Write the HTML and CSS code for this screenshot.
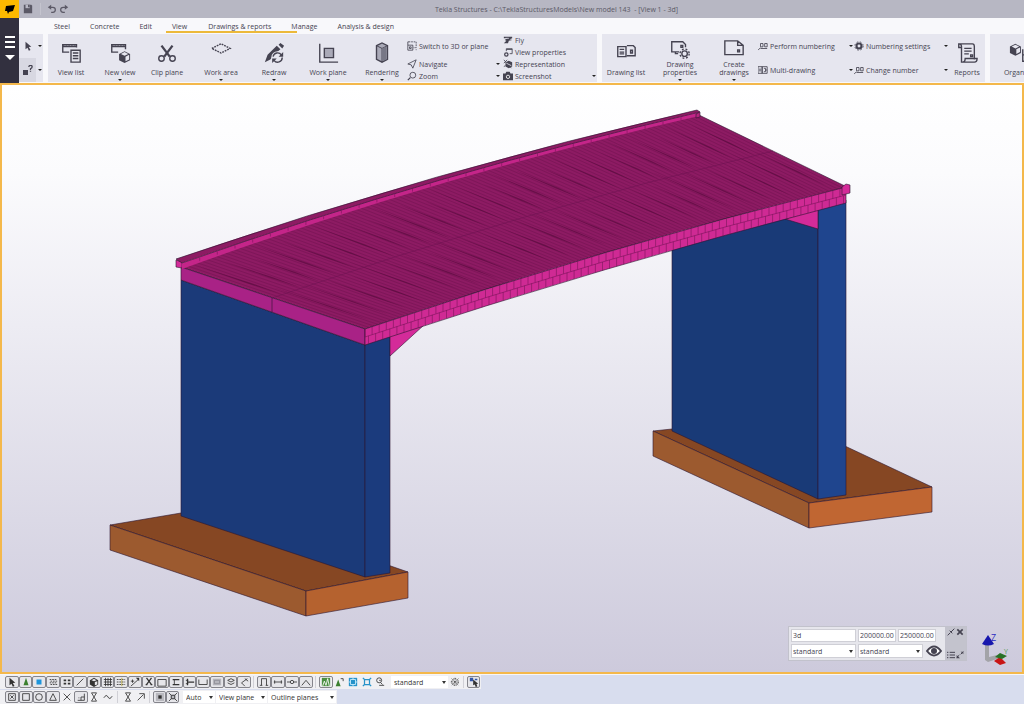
FILE: index.html
```html
<!DOCTYPE html>
<html lang="en">
<head>
    <meta charset="UTF-8">
    <title>Tekla Structures</title>
    <link rel="stylesheet" href="styles.css">
</head>
<body>
    <!-- Icon shapes -->
    <svg class="sprite" aria-hidden="true">
        <symbol id="save" viewBox="0 0 12 12"><path fill="currentColor" d="M1 1h9l1 1v9H1z"/><path fill="#b7b7c3" d="M3 1h5v4H3z"/><path fill="currentColor" d="M6 1h2v3H6z"/></symbol>
        <symbol id="undo" viewBox="0 0 12 12"><path class="l2" d="M3 4h4a3 3 0 0 1 0 6H5"/><path fill="currentColor" d="M1 4l4-3v6z"/></symbol>
        <symbol id="redo" viewBox="0 0 12 12"><path class="l2" d="M9 4H5a3 3 0 0 0 0 6h2"/><path fill="currentColor" d="M11 4L7 1v6z"/></symbol>
        <symbol id="cursor" viewBox="0 0 12 12"><path fill="currentColor" d="M3 1l7 6-3 .3 2 3.500-2 1-1.600-3.600L3 10z"/></symbol>
        <symbol id="ask" viewBox="0 0 12 12"><path fill="currentColor" d="M0 6h6v6H0z"/><path class="l2" d="M7 2.500q0-2 2-2t2 1.500-2 2.500V6M9 7v1"/></symbol>
        <symbol id="viewlist" viewBox="0 0 24 24"><path class="l2" d="M10 11H3V3h15v3M3 5h15"/><path class="l2" stroke-dasharray="2 1" d="M3 3h15"/><path class="l2" d="M12 9h10v13H12zM14 12h6M14 15h6M14 18h6"/></symbol>
        <symbol id="newview" viewBox="0 0 24 24"><path class="l2" d="M10 11H3V3h15v5M3 5h15"/><path class="l2" stroke-dasharray="2 1" d="M3 3h15"/><path fill="currentColor" d="M11 13l6-3 6 3v7l-6 3-6-3z"/><path fill="#e6e6ef" d="M13 13l4-2 4 2-4 2zM18 16l4-2v5l-4 2z"/></symbol>
        <symbol id="clip" viewBox="0 0 24 24"><path class="l3" d="M6 4l9 12M18 4L9 16"/><circle class="l2" cx="6" cy="18" r="3"/><circle class="l2" cx="18" cy="18" r="3"/></symbol>
        <symbol id="area" viewBox="0 0 24 24"><path class="l2" stroke-dasharray="2 1" d="M2 7l10-5 10 5-10 5z"/></symbol>
        <symbol id="redraw" viewBox="0 0 24 24"><path fill="currentColor" d="M2 22l3-8L15 4l4 4-7 6-4 5zM17 3l2-2 4 3-2 3z"/><circle cx="16" cy="17" r="7" fill="#e6e6ef"/><path class="l2" d="M11 16a5 5 0 0 1 9-2M21 17a5 5 0 0 1-9 3"/><path fill="currentColor" d="M22 11v5h-5zM10 23v-5h5z"/></symbol>
        <symbol id="plane" viewBox="0 0 24 24"><path class="l2" d="M3 2v20h20"/><path class="l2" fill="#b4b4c2" d="M8 7h10v10H8z"/></symbol>
        <symbol id="render" viewBox="0 0 24 24"><path class="l2" fill="#aaaab8" d="M6 4l6-3 6 3v15l-6 3-6-3z"/><path class="l" d="M6 4l6 3 6-3M12 7v15"/><path fill="#777786" d="M12 7l5-2v14l-5 2z"/></symbol>
        <symbol id="switch" viewBox="0 0 12 12"><path class="l" d="M1 5h6v6H1zM1 5V1h3M3 7h2v2H3z"/><path class="l" stroke-dasharray="2 1" d="M5 1h6v7H8M11 10v1"/></symbol>
        <symbol id="nav" viewBox="0 0 12 12"><path class="l" d="M1 6l10-5-4 10-2-4z"/></symbol>
        <symbol id="zoom" viewBox="0 0 12 12"><circle class="l" cx="7" cy="5" r="3.500"/><path class="l2" d="M4 8l-3 3"/></symbol>
        <symbol id="fly" viewBox="0 0 12 12"><path fill="currentColor" d="M1 2h10v2L8 5l3 1-4 1-1 3H1l3-3-2-1 3-2H1z"/><path stroke="#e6e6ef" d="M3 4h4"/></symbol>
        <symbol id="vprops" viewBox="0 0 12 12"><path class="l" d="M4 5V2h7v6H8M4 3h7"/><circle class="l2" cx="4" cy="9" r="2"/></symbol>
        <symbol id="repr" viewBox="0 0 12 12"><path fill="currentColor" d="M3 4l4-2 4 2v5l-4 2-4-2z"/><path class="l" d="M1 1l9 10M1 5l4-4M1 9l2-1"/><path d="M4 5l6 3" stroke="#e6e6ef"/></symbol>
        <symbol id="camera" viewBox="0 0 12 12"><path fill="currentColor" d="M0 3h3l1-2h4l1 2h3v8H0z"/><circle cx="6" cy="7" r="2" fill="none" stroke="#fff"/></symbol>
        <symbol id="dlist" viewBox="0 0 24 24"><path class="l2" d="M3 5h9v11H3zM5 8h5M5 11h5M5 13h5M13 4h7l2 2v9h-9"/><path class="l2" d="M17 9h2v3h-2z"/></symbol>
        <symbol id="dprops" viewBox="0 0 24 24"><path class="l2" d="M11 14H3V3h12l3 3v3M7 14v2h3M13 7h2v2h-2z"/><circle class="l2" cx="17" cy="16" r="3"/><circle class="l2" stroke-dasharray="2 2" cx="17" cy="16" r="5"/></symbol>
        <symbol id="create" viewBox="0 0 24 24"><path class="l2" d="M2 2h14l6 5v10H2zM16 2v5h6M16 12h2v2h-2z"/></symbol>
        <symbol id="number" viewBox="0 0 12 12"><path class="l" d="M0 11l3-3M3 3h3v4H3zM8 3h3v4H8zM3 9h8"/></symbol>
        <symbol id="multi" viewBox="0 0 12 12"><path class="l" d="M0 2h5v8H0zM5 2h6v8H5zM1 5h3M1 7h3M7 4h2v4H7M9 6h2"/></symbol>
        <symbol id="gear" viewBox="0 0 12 12"><circle class="l3" cx="6" cy="6" r="3"/><circle class="l" stroke-dasharray="2 2" cx="6" cy="6" r="5"/></symbol>
        <symbol id="report" viewBox="0 0 24 24"><path class="l2" d="M6 18V5q0-3-3-3v4h3M3 2h15q2 0 2 3v14M6 18v4h14q3 0 3-4H10q0 4-3 4M9 7h8M9 10h8M9 13h5M16 14h2v2h-2z"/></symbol>
        <symbol id="org" viewBox="0 0 24 24"><path fill="currentColor" d="M1 5l6-3 6 3v7l-6 3-6-3z"/><path d="M3 5l4-2 4 2-4 2zM8 8l4-2v5l-4 2z" fill="#e6e6ef"/><path class="l2" d="M15 8v13h3M15 14h3M18 12h5v4h-5zM18 19h5v4h-5z"/></symbol>
        <symbol id="cone" viewBox="0 0 12 12"><path fill="#3b8030" d="M6 1l3 9H3z"/></symbol>
        <symbol id="blue" viewBox="0 0 12 12"><path fill="#1c95dc" d="M3 3h6v6H3z"/></symbol>
        <symbol id="hatch" viewBox="0 0 12 12"><path class="l" stroke-dasharray="2 1" d="M2 3h8M3 5h8M2 7h8M3 9h8"/></symbol>
        <symbol id="dots" viewBox="0 0 12 12"><path fill="currentColor" d="M2 3h3v2H2zM7 3h3v2H7zM2 7h3v2H2zM7 7h3v2H7z"/></symbol>
        <symbol id="line" viewBox="0 0 12 12"><path class="l" d="M2 10l8-8"/></symbol>
        <symbol id="cube" viewBox="0 0 12 12"><path fill="currentColor" d="M1 4l5-3 5 3v5l-5 3-5-3z"/><path fill="#e6e6ea" d="M3 4l3-2 3 2-3 1zM7 6l3-1v4l-3 1z"/></symbol>
        <symbol id="grid" viewBox="0 0 12 12"><path class="l" d="M1 3h10M1 6h10M1 9h10M3 1v10M6 1v10M9 1v10"/></symbol>
        <symbol id="gridc" viewBox="0 0 12 12"><path class="l" stroke-dasharray="2 1" d="M1 3h10M1 6h10M1 9h10"/><path stroke="#b3a437" d="M7 1v10"/></symbol>
        <symbol id="weld" viewBox="0 0 12 12"><path class="l" d="M1 11l9-8M3 3v4M1 5h4"/><path fill="currentColor" d="M7 1h4v4z"/></symbol>
        <symbol id="cut" viewBox="0 0 12 12"><path class="l2" d="M3 1l6 8M9 1L3 9"/><path class="l2" d="M2 9h2M8 9h2"/></symbol>
        <symbol id="box" viewBox="0 0 12 12"><path class="l" d="M1 3h10v8H1z"/></symbol>
        <symbol id="bars" viewBox="0 0 12 12"><path class="l2" d="M2 3h8M2 9h8"/><path class="l" d="M4 3v6"/></symbol>
        <symbol id="bolt" viewBox="0 0 12 12"><path class="l2" d="M3 2v8M3 6h8"/><path class="l" d="M1 4h3M1 8h3"/></symbol>
        <symbol id="chan" viewBox="0 0 12 12"><path class="l" d="M1 3v6h10V3"/></symbol>
        <symbol id="mesh" viewBox="0 0 12 12"><path fill="#b5b5bc" d="M1 2h10v8H1z"/><path stroke="#8d8d95" fill="none" d="M3 4h6v4H3z"/></symbol>
        <symbol id="layer" viewBox="0 0 12 12"><path class="l" d="M2 4l4-2 4 2-4 2zM2 7l4 2 4-2"/></symbol>
        <symbol id="pour" viewBox="0 0 12 12"><path class="l" d="M10 2L3 7l4 4M7 2l4 3"/></symbol>
        <symbol id="frame" viewBox="0 0 12 12"><path class="l" d="M3 10V2h6v8M1 10h3M8 10h3"/></symbol>
        <symbol id="dist" viewBox="0 0 12 12"><path class="l" d="M1 6h10M2 4v4M10 4v4"/></symbol>
        <symbol id="node" viewBox="0 0 12 12"><path class="l" d="M0 6h4M8 6h4"/><circle class="l" cx="6" cy="6" r="2"/></symbol>
        <symbol id="roof" viewBox="0 0 12 12"><path class="l" d="M1 10l5-6 5 6"/></symbol>
        <symbol id="green" viewBox="0 0 12 12"><path fill="#4b8f42" d="M1 1h10v10H1z"/><path d="M2 11l2-6 2 5 2-8 2 9" fill="none" stroke="#fff"/></symbol>
        <symbol id="greenup" viewBox="0 0 12 12"><path fill="#3b8030" d="M5 3l3 8H2z"/><path class="l" d="M8 2h3v3"/></symbol>
        <symbol id="cyan" viewBox="0 0 12 12"><path fill="#2793c9" d="M1 1h10v10H1z"/><path fill="none" stroke="#d2f1ff" d="M3 3h6v6H3zM1 6h2M9 6h2M6 1v2M6 9v2"/></symbol>
        <symbol id="cyan2" viewBox="0 0 12 12"><path fill="none" stroke="#2793c9" stroke-width="1.500" d="M3 3h6v6H3zM1 1l2 2M11 1L9 3M1 11l2-2M11 11L9 9"/></symbol>
        <symbol id="key" viewBox="0 0 12 12"><circle class="l" cx="5" cy="4" r="3"/><path class="l" d="M5 4h2M7 7l2 2M5 10h6"/></symbol>
        <symbol id="snow" viewBox="0 0 12 12"><path class="l" stroke-dasharray="1 1" d="M2 2l8 8M10 2l-8 8M6 1v10M1 6h10"/><circle class="l" stroke-dasharray="2 1" cx="6" cy="6" r="4"/></symbol>
        <symbol id="pick" viewBox="0 0 12 12"><path fill="#3457a8" d="M1 1h4v4H1zM7 2h3v2H7z"/><path fill="currentColor" d="M5 3l6 5-2 .5 1 3-2 .5-1-3-2 1z"/></symbol>
        <symbol id="boxx" viewBox="0 0 12 12"><path class="l" d="M2 2h8v8H2zM4 4l4 4M8 4L4 8"/></symbol>
        <symbol id="sq" viewBox="0 0 12 12"><path class="l" d="M2 2h8v8H2z"/></symbol>
        <symbol id="circ" viewBox="0 0 12 12"><circle class="l" cx="6" cy="6" r="4"/></symbol>
        <symbol id="tri" viewBox="0 0 12 12"><path class="l" d="M6 2l4 8H2z"/></symbol>
        <symbol id="x" viewBox="0 0 12 12"><path class="l" d="M2 2l8 8M10 2l-8 8"/></symbol>
        <symbol id="perp" viewBox="0 0 12 12"><path class="l" d="M10 2v8H2M6 10V6h4M3 7h1"/></symbol>
        <symbol id="glass" viewBox="0 0 12 12"><path class="l" d="M3 1h6L3 11h6L3 1"/></symbol>
        <symbol id="wave" viewBox="0 0 12 12"><path class="l" d="M1 7q3-5 5-1t5-1"/></symbol>
        <symbol id="arrow" viewBox="0 0 12 12"><path class="l" d="M2 10l7-7M4 2h6v6"/></symbol>
        <symbol id="dot" viewBox="0 0 12 12"><path fill="#b9b9bf" d="M1 1h10v10H1z"/><path fill="currentColor" d="M4 4h4v4H4z"/></symbol>
        <symbol id="corners" viewBox="0 0 12 12"><path fill="#b9b9bf" d="M3 3h6v6H3z"/><path class="l" d="M1 1l3 3M11 1L8 4M1 11l3-3M11 11L8 8M4 4h4v4H4z"/></symbol>
        <symbol id="eye" viewBox="0 0 16 12"><path d="M1 6q7-9 14 0-7 9-14 0z" fill="#fff" stroke="currentColor" stroke-width="2"/><circle cx="8" cy="6" r="3" fill="currentColor"/></symbol>
        <symbol id="pin" viewBox="0 0 12 12"><path class="l2" d="M1 11l4-4M4 4l4 4M6 6l5-5"/></symbol>
        <symbol id="close" viewBox="0 0 12 12"><path class="l3" d="M2 2l8 8M10 2l-8 8"/></symbol>
        <symbol id="rows" viewBox="0 0 12 12"><path class="l2" d="M0 2h2M4 2h8M0 6h2M4 6h8M0 10h2M4 10h8"/></symbol>
        <symbol id="shrink" viewBox="0 0 12 12"><path class="l2" d="M1 10l4-4M7 5l4-4"/><path fill="currentColor" d="M1 6v5h5zM7 1h4v4z"/></symbol>
    </svg>

    <header class="titlebar">
        <div class="logo"><svg viewBox="0 0 19 18"><path d="M6 6l9-1-2 6-4 1-1 2-1-3H5z"/></svg></div>
        <button class="tb-btn" aria-label="Save"><svg><use href="#save"/></svg></button>
        <span class="tb-line"></span>
        <button class="tb-btn" aria-label="Undo"><svg><use href="#undo"/></svg></button>
        <button class="tb-btn" aria-label="Redo"><svg><use href="#redo"/></svg></button>
        <h1>Tekla Structures - C:\TeklaStructuresModels\New model 143 &nbsp;- [View 1 - 3d]</h1>
    </header>

    <div class="top">
        <button class="menu" aria-label="Menu"><i></i><i></i><i></i><b></b></button>
        <div class="top-main">
            <nav class="tabs">
                <a href="#">Steel</a>
                <a href="#">Concrete</a>
                <a href="#">Edit</a>
                <span class="active"><a href="#">View</a><a href="#">Drawings &amp; reports</a></span>
                <a href="#">Manage</a>
                <a href="#">Analysis &amp; design</a>
            </nav>
            <div class="ribbon">
                <div class="quick">
                    <button class="drop" aria-label="Select"><svg><use href="#cursor"/></svg></button>
                    <button class="drop" aria-label="Inquire"><svg><use href="#ask"/></svg></button>
                </div>
                <div class="group group-view">
                    <button class="big"><svg><use href="#viewlist"/></svg>View list</button>
                    <button class="big more"><svg><use href="#newview"/></svg>New view</button>
                    <button class="big"><svg><use href="#clip"/></svg>Clip plane</button>
                    <button class="big more"><svg><use href="#area"/></svg>Work area</button>
                    <button class="big more"><svg><use href="#redraw"/></svg>Redraw</button>
                    <button class="big more"><svg><use href="#plane"/></svg>Work plane</button>
                    <button class="big more"><svg><use href="#render"/></svg>Rendering</button>
                    <div class="col four">
                        <button class="small tall"><svg><use href="#switch"/></svg>Switch to 3D or plane</button>
                        <button class="small drop"><svg><use href="#nav"/></svg>Navigate</button>
                        <button class="small drop"><svg><use href="#zoom"/></svg>Zoom</button>
                    </div>
                    <div class="col four last">
                        <button class="small"><svg><use href="#fly"/></svg>Fly</button>
                        <button class="small"><svg><use href="#vprops"/></svg>View properties</button>
                        <button class="small"><svg><use href="#repr"/></svg>Representation</button>
                        <button class="small drop"><svg><use href="#camera"/></svg>Screenshot</button>
                    </div>
                </div>
                <div class="group group-draw">
                    <button class="big"><svg><use href="#dlist"/></svg>Drawing list</button>
                    <button class="big two more"><svg><use href="#dprops"/></svg>Drawing<br>properties</button>
                    <button class="big two more"><svg><use href="#create"/></svg>Create<br>drawings</button>
                    <div class="col">
                        <button class="small drop"><svg><use href="#number"/></svg>Perform numbering</button>
                        <button class="small drop"><svg><use href="#multi"/></svg>Multi-drawing</button>
                    </div>
                    <div class="col">
                        <button class="small drop"><svg><use href="#gear"/></svg>Numbering settings</button>
                        <button class="small drop"><svg><use href="#number"/></svg>Change number</button>
                    </div>
                    <button class="big"><svg><use href="#report"/></svg>Reports</button>
                </div>
                <div class="group group-org">
                    <button class="big"><svg><use href="#org"/></svg>Organizer</button>
                </div>
            </div>
        </div>
    </div>

    <main class="view">
        <svg class="scene" viewBox="2 85 1020 587" role="img" aria-label="3d bridge model">
            <!-- footings -->
            <g class="edge">
                <path fill="#864723" d="M653 431L672 429 760 408 847 447 932 487 809 503z"/>
                <path fill="#9c5a2f" d="M653 431L809 503V528L653 456z"/>
                <path fill="#c06632" d="M809 503L932 487V512L809 528z"/>
                <path fill="#864723" d="M110 525L181 513 330 545 408 572 306 591z"/>
                <path fill="#9c5a2f" d="M110 525L306 591V616L110 550z"/>
                <path fill="#b5622f" d="M306 591L408 572V598L306 616z"/>
            </g>
            <!-- walls -->
            <g class="edge">
                <path fill="#193a77" d="M672 245L785 215 818 211V499L672 431z"/>
                <path fill="#1f458e" d="M818 208L846 200V495L818 499z"/>
                <path fill="#d42b99" d="M785 219L818 208V229z"/>
                <path fill="#1b3a79" d="M181 280L365 345V577L181 516z"/>
                <path fill="#1b3b7d" d="M365 345L390 335V573L365 577z"/>
                <path fill="#d42b99" d="M390 335L424 322V325L390 356z"/>
            </g>
            <!-- deck -->
            <g class="edge">
                <path fill="#8d1b63" d="M181 267Q438 175 699 115L847 187Q606 247 365 329z"/>
                <path fill="#a92286" d="M181 267L365 329V345L181 280zM272 298V312"/>
            </g>
            <g id="boards"></g>
            <path class="edge" fill="#cf2a94" d="M365 329Q606 247 846 187V203Q606 265 365 345z"/>
            <g id="bricks" class="joint"></g>
            <path class="edge" fill="#d42b99" d="M176 260L182 262V268L176 267zM842 187L846 184 850 185V193L842 195z"/>
            <path fill="#c42589" d="M182 263Q438 172 699 112V116Q438 176 182 269z"/>
            <path class="edge" fill="#8d1b63" d="M176 259Q436 170 697 110L700 112Q438 173 182 263z"/>
            <path class="edge" fill="#b3247c" d="M696 114L700 112V117L696 118z"/>
            <g id="curb" class="joint"></g>
            <!-- axes -->
            <path d="M985 644h4v13l12-3 2 3-15 5-3-2z" fill="#a3a3a8"/>
            <path d="M988 635l6 9q-6 3-12 0z" fill="#1717ad"/>
            <path d="M994 661l6-4 6 6-6 2z" fill="#c81515"/>
            <path d="M995 657l5-4 7 3-5 3z" fill="#297126"/>
            <text class="z" x="991" y="641">Z</text>
            <text class="y" x="1004" y="654">Y</text>
        </svg>

        <form class="panel">
            <div class="fields">
                <div class="frow"><input class="wide" aria-label="View name" value="3d"><input aria-label="Depth down" value="200000.00"><input aria-label="Depth up" value="250000.00"></div>
                <div class="frow">
                    <span class="pick wide"><select aria-label="View settings"><option>standard</option></select></span>
                    <span class="pick wide"><select aria-label="Visibility"><option>standard</option></select></span>
                    <button type="button" class="eye" aria-label="Show"><svg><use href="#eye"/></svg></button>
                </div>
            </div>
            <div class="panel-side">
                <button type="button" aria-label="Pin"><svg><use href="#pin"/></svg></button>
                <button type="button" aria-label="Close"><svg><use href="#close"/></svg></button>
                <button type="button" aria-label="List"><svg><use href="#rows"/></svg></button>
                <button type="button" aria-label="Collapse"><svg><use href="#shrink"/></svg></button>
            </div>
        </form>
    </main>

    <footer>
        <div class="bar">
            <div class="tools boxed select-tools" data-icons="cursor cone blue hatch dots line cube grid gridc weld cut box bars bolt chan mesh layer pour"></div>
            <div class="tools boxed mid-tools" data-icons="frame dist node roof"></div>
            <div class="tools color-tools" data-icons="green greenup cyan cyan2 key"></div>
            <span class="pick filter"><select aria-label="Selection filter"><option>standard</option></select></span>
            <div class="tools" data-icons="snow"></div>
            <div class="tools boxed last-tool" data-icons="pick"></div>
        </div>
        <div class="bar">
            <div class="tools snap-tools" data-icons="boxx sq circ tri x perp glass wave"></div>
            <div class="tools" data-icons="glass arrow"></div>
            <div class="tools boxed" data-icons="dot corners"></div>
            <span class="pick auto"><select aria-label="Snap depth"><option>Auto</option></select></span>
            <span class="pick vplane"><select aria-label="Plane"><option>View plane</option></select></span>
            <span class="pick oplane"><select aria-label="Outline"><option>Outline planes</option></select></span>
        </div>
    </footer>
    <script src="script.js"></script>
</body>
</html>
```
FILE: styles.css
```css
* {
    box-sizing: border-box;
}
body {
    margin: 0;
    min-height: 100vh;
    display: flex;
    flex-direction: column;
    font-family: "Open Sans", "Noto Sans", sans-serif;
    font-size: 7px;
    line-height: 9px;
    color: #454351;
    background: #fff;
    overflow: hidden;
}
button, input, select {
    font: inherit;
    color: inherit;
    margin: 0;
    padding: 0;
    border: 0;
    background: none;
    border-radius: 0;
}
svg {
    display: block;
}
.sprite {
    position: absolute;
    width: 0;
    height: 0;
}
.l, .l2, .l3 {
    fill: none;
    stroke: currentColor;
    stroke-width: 1;
}
.l2 {
    stroke-width: 1.5;
}
.l3 {
    stroke-width: 2.5;
}
.l2[fill] {
    fill: #aaaab8;
}

/* Title bar */
.titlebar {
    display: flex;
    align-items: center;
    height: 18px;
    background: #b7b7c3;
    color: #5b5966;
}
.titlebar h1 {
    flex: 1;
    margin: 0;
    padding-left: 18px;
    text-align: center;
    font-size: 7px;
    font-weight: normal;
}
.logo {
    width: 19px;
    height: 18px;
    background: #fdb900;
}
.tb-btn {
    width: 12px;
}
.tb-btn svg {
    width: 10px;
    height: 10px;
}
.logo + .tb-btn {
    margin-left: 4px;
}
.tb-line {
    width: 1px;
    height: 12px;
    margin: 0 6px 0 5px;
    background: #c4c4ce;
}

/* Tabs and ribbon */
.top {
    display: flex;
    height: 65px;
    background: #f8f8fb;
}
.menu {
    display: flex;
    flex-direction: column;
    align-items: center;
    gap: 3px;
    width: 19px;
    padding-top: 18px;
    background: #32303f;
}
.menu i {
    width: 10px;
    height: 2px;
    background: #fff;
}
.menu b {
    margin-top: 4px;
    border: 5px solid transparent;
    border-top-color: #fff;
}
.top-main {
    flex: 1;
    min-width: 0;
}
.tabs {
    display: flex;
    gap: 20px;
    height: 16px;
    padding: 4px 0 0 35px;
}
.tabs a {
    color: inherit;
    text-decoration: none;
}
.tabs .active {
    display: flex;
    gap: 21px;
    height: 11px;
    margin: 0 -26px 0 -6px;
    padding: 0 26px 0 6px;
    border-bottom: 2px solid #ecb93a;
}
.ribbon {
    display: flex;
    gap: 5px;
    height: 48px;
    overflow: hidden;
}
.quick {
    display: grid;
    flex: none;
    width: 24px;
    background: #e6e6ef;
}
.quick .drop {
    padding-left: 4px;
}
.quick .drop:last-child {
    background: linear-gradient(90deg, #d8d8e2 17px, #e6e6ef 17px);
}
.quick svg {
    width: 10px;
    height: 10px;
}
.group {
    display: grid;
    flex: none;
    background: #e6e6ef;
}
.group-view {
    grid-template-columns: 46px 52px 42px 66px 40px 68px 40px 99px 96px;
}
.group-draw {
    grid-template-columns: 48px 60px 48px 96px 95px 36px;
}
.group-org {
    grid-template-columns: 60px;
}
.big {
    display: flex;
    flex-direction: column;
    align-items: center;
    position: relative;
    padding-top: 8px;
    white-space: nowrap;
    line-height: 8px;
}
.big svg {
    width: 22px;
    height: 22px;
    margin-bottom: 5px;
}
.big.two {
    padding-top: 5px;
}
.big.two svg {
    margin-bottom: 0;
}
.big.more::after {
    content: "";
    position: absolute;
    bottom: 1px;
    border: 2px solid transparent;
    border-top-color: #222;
    border-bottom: 0;
}
.col {
    display: grid;
    grid-template-rows: 1fr 1fr;
}
.four {
    grid-template-rows: repeat(4, 12px);
    padding-left: 5px;
}
.last {
    padding-left: 2px;
}
.small {
    display: flex;
    align-items: center;
    gap: 2px;
    white-space: nowrap;
}
.small svg {
    width: 10px;
    height: 10px;
}
.tall {
    grid-row: span 2;
}
.drop {
    display: flex;
    align-items: center;
}
.drop::after {
    content: "";
    margin: 0 1px 0 auto;
    border: 2px solid transparent;
    border-top-color: #222;
    border-bottom: 0;
}

/* 3d view */
.view {
    position: relative;
    flex: 1;
    min-height: 0;
    border: 2px solid #f4b84b;
    background: linear-gradient(#fff, #fbfbfd 15%, #cdcadc);
}
.scene {
    position: absolute;
    width: 100%;
    height: 100%;
}
.edge {
    stroke: #2b1530;
    stroke-width: 0.6;
}
.joint {
    fill: none;
    stroke: #6b1250;
    stroke-width: 0.5;
}
.board {
    stroke: #4f0938;
    stroke-width: 0.5;
    opacity: 0.45;
}
.streak {
    fill: #560b3c;
    opacity: 0.65;
}
.scene text {
    font-size: 9px;
}
.scene .z {
    fill: #2b2bc0;
}
.scene .y {
    fill: #4f9c4c;
    font-size: 7px;
}
.panel {
    position: absolute;
    right: 55px;
    bottom: 11px;
    display: flex;
    height: 35px;
    border: 1px solid #c2c2cc;
    background: #e6e6ec;
}
.fields {
    display: grid;
    gap: 2px;
    width: 156px;
    padding: 2px;
}
.frow {
    display: flex;
    gap: 2px;
}
.frow input, .frow .pick {
    width: 38px;
    border: 1px solid #cfcfd6;
    background: #fff;
    padding-left: 1px;
}
.frow .wide {
    width: 65px;
}
.eye {
    flex: 1;
}
.eye svg {
    width: 16px;
    height: 12px;
    margin: 0 auto;
}
.panel-side {
    display: grid;
    grid-template-columns: 1fr 1fr;
    align-content: space-between;
    justify-items: center;
    width: 21px;
    padding: 1px;
    background: #c3c3cd;
}
.panel-side svg {
    width: 8px;
    height: 8px;
}

/* Drop-downs */
.pick {
    display: flex;
    align-items: center;
    position: relative;
    background: #fff;
}
.pick select {
    appearance: none;
    width: 100%;
    outline: 0;
}
.pick::after {
    content: "";
    position: absolute;
    right: 2px;
    border: 2px solid transparent;
    border-top: 3px solid #333;
    border-bottom: 0;
}

/* Bottom toolbars */
footer {
    display: grid;
    gap: 1px;
    padding: 1px 0 2px;
    background: linear-gradient(#f6f6f8 1px, #d8ddee 1px, #d8ddee 30px, #fff 30px);
    color: #333;
}
.bar {
    display: flex;
    align-items: center;
    justify-self: start;
    height: 14px;
    padding: 0 1px 0 5px;
    background: #f0f0f3;
}
.tools {
    display: flex;
}
.tools button {
    display: flex;
    flex: 1;
    justify-content: center;
    align-items: center;
    min-width: 13px;
    height: 12px;
    border: 1px solid transparent;
}
.tools svg {
    width: 10px;
    height: 10px;
}
.boxed button, .snap-tools button:nth-child(-n+4), .snap-tools button:nth-child(6) {
    border-color: #85858c;
    border-radius: 2px;
    background: #e6e6ea;
}
.tools + .tools {
    margin-left: 2px;
    padding-left: 3px;
    border-left: 1px solid #d0d0d6;
}
.select-tools {
    width: 246px;
}
.mid-tools {
    width: 60px;
}
.color-tools {
    width: 72px;
}
.color-tools button:first-child {
    border-color: #85858c;
    border-radius: 2px;
}
.snap-tools {
    width: 110px;
}
.bar .pick {
    height: 12px;
    margin-left: 4px;
    padding-left: 3px;
}
.filter {
    width: 57px;
}
.auto {
    width: 32px;
}
.bar .vplane, .bar .oplane {
    margin-left: 1px;
}
.vplane {
    width: 51px;
}
.oplane {
    width: 68px;
}
```
FILE: script.js
```js
var NS = "http://www.w3.org/2000/svg";

function add(parent, d, cls) {
    var p = document.createElementNS(NS, "path");
    p.setAttribute("d", d);
    if (cls) p.setAttribute("class", cls);
    document.getElementById(parent).appendChild(p);
}

// point on a quadratic curve
function quad(a, c, b, t) {
    var s = 1 - t;
    return [s * s * a[0] + 2 * s * t * c[0] + t * t * b[0],
            s * s * a[1] + 2 * s * t * c[1] + t * t * b[1]];
}

// u runs along the bridge, v from the back edge to the front edge
function deck(u, v) {
    var a = quad([181, 267], [438, 175], [699, 115], u);
    var b = quad([365, 329], [606, 247], [847, 187], u);
    return [a[0] + (b[0] - a[0]) * v, a[1] + (b[1] - a[1]) * v];
}
function bottom(u) {
    return quad([365, 345], [606, 265], [846, 203], u);
}
function poly(points) {
    return "M" + points.map(function (p) {
        return p[0].toFixed(1) + " " + p[1].toFixed(1);
    }).join("L");
}

// Deck boards
var i;
for (i = 1; i < 110; i++) {
    add("boards", poly([deck(i / 110, 0), deck(i / 110, 1)]), "board");
}
// Dark streaks where the edges run together
function streak(u, from, to) {
    var mid = from + (to - from) * 0.6;
    add("boards", poly([deck(u, from), deck(u + 0.003, mid), deck(u + 0.001, to), deck(u - 0.001, mid)]) + "z", "streak");
}
for (i = 0; i < 26; i++) {
    var u0 = (i + 0.5) / 26.5;
    streak(u0, 0.04 + (i % 3) * 0.04, 0.5);
    streak(u0 + 0.012, 0.42 + (i % 4) * 0.04, 0.94);
}
add("boards", "M272 298Q522 211 773 151", "joint");

// Two courses along the front face
add("bricks", "M365 337Q606 256 846 195");
for (i = 0; i < 68; i++) {
    var t = i / 68, h = (i + 0.5) / 68;
    var a = deck(t, 1), b = bottom(t), c = deck(h, 1), d = bottom(h);
    add("bricks", poly([a, [a[0], (a[1] + b[1]) / 2]]));
    add("bricks", poly([[c[0], (c[1] + d[1]) / 2], [c[0], d[1]]]));
}
// Curb joints
for (i = 1; i < 29; i++) {
    var k = quad([182, 264], [438, 173], [699, 113], i / 29);
    add("curb", poly([k, [k[0], k[1] + 3]]));
}

// Toolbar buttons
document.querySelectorAll("[data-icons]").forEach(function (bar) {
    bar.dataset.icons.split(" ").forEach(function (name) {
        bar.insertAdjacentHTML("beforeend", '<button aria-label="' + name + '"><svg><use href="#' + name + '"/></svg></button>');
    });
});
```
